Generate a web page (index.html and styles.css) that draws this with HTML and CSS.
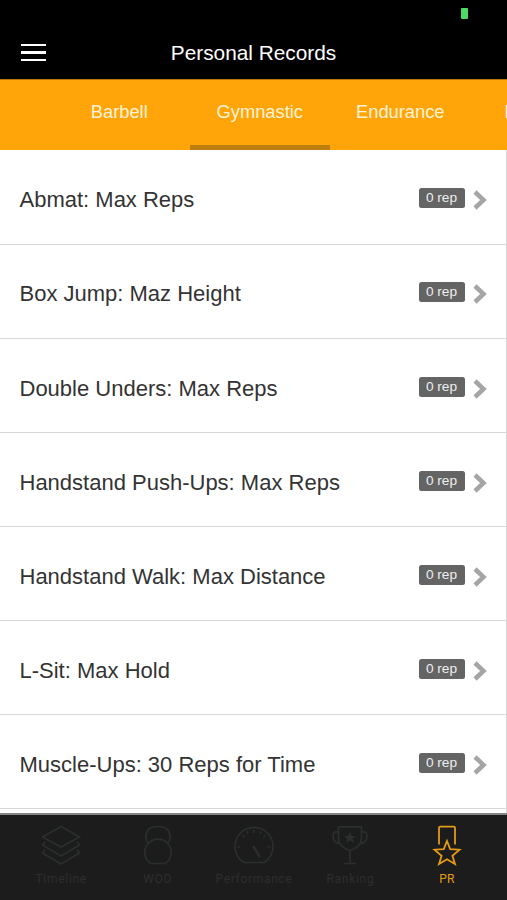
FILE: index.html
```
<!DOCTYPE html>
<html lang="en">
<head>
<meta charset="UTF-8">
<meta name="viewport" content="width=device-width, initial-scale=1.0">
<title>Personal Records</title>
<link rel="stylesheet" href="styles.css">
</head>
<body>

<header class="header">
    <div class="status"><span class="battery"></span></div>
    <div class="titlebar">
        <div class="menu"><span></span><span></span><span></span></div>
        <h1>Personal Records</h1>
    </div>
</header>

<nav class="tabs">
    <a class="tab">Barbell</a>
    <a class="tab active">Gymnastic</a>
    <a class="tab">Endurance</a>
    <a class="tab last">M</a>
</nav>

<main class="list">
    <div class="row">
        <span class="name">Abmat: Max Reps</span>
        <span class="badge">0 rep</span>
        <svg class="arrow" viewBox="0 0 14 20"><path d="M2 2l8.500 8L2 18"/></svg>
    </div>
    <div class="row">
        <span class="name">Box Jump: Maz Height</span>
        <span class="badge">0 rep</span>
        <svg class="arrow" viewBox="0 0 14 20"><path d="M2 2l8.500 8L2 18"/></svg>
    </div>
    <div class="row">
        <span class="name">Double Unders: Max Reps</span>
        <span class="badge">0 rep</span>
        <svg class="arrow" viewBox="0 0 14 20"><path d="M2 2l8.500 8L2 18"/></svg>
    </div>
    <div class="row">
        <span class="name">Handstand Push-Ups: Max Reps</span>
        <span class="badge">0 rep</span>
        <svg class="arrow" viewBox="0 0 14 20"><path d="M2 2l8.500 8L2 18"/></svg>
    </div>
    <div class="row">
        <span class="name">Handstand Walk: Max Distance</span>
        <span class="badge">0 rep</span>
        <svg class="arrow" viewBox="0 0 14 20"><path d="M2 2l8.500 8L2 18"/></svg>
    </div>
    <div class="row">
        <span class="name">L-Sit: Max Hold</span>
        <span class="badge">0 rep</span>
        <svg class="arrow" viewBox="0 0 14 20"><path d="M2 2l8.500 8L2 18"/></svg>
    </div>
    <div class="row">
        <span class="name">Muscle-Ups: 30 Reps for Time</span>
        <span class="badge">0 rep</span>
        <svg class="arrow" viewBox="0 0 14 20"><path d="M2 2l8.500 8L2 18"/></svg>
    </div>
</main>

<footer class="bottom">
    <a class="item">
        <svg viewBox="0 0 42 42">
            <path d="M21 1.500L39.500 12 21 22 2.500 12z"/>
            <path d="M5 17l-2.500 3L21 31l18.500-11-2.500-3"/>
            <path d="M5 25l-2.500 3L21 39l18.500-11-2.500-3"/>
        </svg>
        <span>Timeline</span>
    </a>
    <a class="item">
        <svg viewBox="0 0 42 42">
            <path d="M11 18.500C8.500 14.500 8 10 10.500 6 12 3 15 1.500 21 1.500s9 1.500 10.500 4.500c2.500 4 2 8.500-.5 12.500"/>
            <path d="M14 38.500a13.200 13.200 0 1 1 14 0z"/>
        </svg>
        <span>WOD</span>
    </a>
    <a class="item">
        <svg viewBox="0 0 42 42">
            <path d="M11 37.500a19 19 0 1 1 20 0z"/>
            <path d="M21 5v3M9.500 10l2 2M32.500 10l-2 2M4.500 22h3M37.500 22h-3M14 6.500l1 2M28 6.500l-1 2"/>
            <path class="needle" d="M20 21l7 11"/>
        </svg>
        <span>Performance</span>
    </a>
    <a class="item">
        <svg viewBox="0 0 42 42">
            <path d="M9.500 1.800h23v12c0 7-6 10-11.500 12-5.500-2-11.500-5-11.500-12z"/>
            <path d="M9.500 7C5 6 4 8.500 4 11.500s2 7 6.500 7M32.500 7C37 6 38 8.500 38 11.500s-2 7-6.500 7M21 26v12M15 38.500h12"/>
            <path class="fill" d="M21 7l1.700 4h4.300l-3.400 2.700 1.300 4.300-3.900-2.500-3.900 2.500 1.300-4.300-3.400-2.700h4.300z"/>
        </svg>
        <span>Ranking</span>
    </a>
    <a class="item selected">
        <svg viewBox="0 0 42 42">
            <path d="M13 19.500V2.800q0-1.200 1.200-1.200h13.600q1.200 0 1.200 1.200V19.500"/>
            <path d="M21 16l3.200 8.200 9.300.5-7.100 6.100 2.600 8.200-8-4.700-8 4.700 2.600-8.200-7.100-6.100 9.300-.5z"/>
        </svg>
        <span>PR</span>
    </a>
</footer>

</body>
</html>
```
FILE: styles.css
```
* {
    box-sizing: border-box;
}

body {
    margin: 0;
    height: 900px;
    display: flex;
    flex-direction: column;
    overflow: hidden;
    background-color: #fff;
    font-family: "Liberation Sans", Arial, sans-serif;
}

.header {
    height: 79px;
    background-color: #000;
}

.status {
    height: 26px;
    display: flex;
    justify-content: flex-end;
    padding: 8px 39px 0 0;
}

.battery {
    width: 7px;
    height: 11px;
    border-radius: 1px;
    background-color: #4cd964;
}

.titlebar {
    display: grid;
    grid-template-columns: 46px 1fr 46px;
    align-items: center;
    height: 53px;
}

.menu {
    display: flex;
    flex-direction: column;
    gap: 5px;
    width: 25px;
    margin-left: 20.5px;
}

.menu span {
    height: 2.5px;
    background-color: #fff;
}

h1 {
    margin: 0;
    color: #fff;
    font-size: 20.8px;
    font-weight: normal;
    text-align: center;
}

.tabs {
    display: flex;
    height: 71px;
    padding-left: 49px;
    overflow: hidden;
    background-color: #ffa50a;
    border-top: 1px solid #b87708;
}

.tab {
    flex: 0 0 140.5px;
    padding-top: 21px;
    border-bottom: 5px solid transparent;
    color: #fff3d6;
    font-size: 18.3px;
    line-height: 22px;
    text-align: center;
}

.tab.active {
    border-color: #bd7f10;
}

.tab.last {
    padding-left: 34px;
    text-align: left;
}

.list {
    height: 663px;
    padding-top: 0.8px;
    border-right: 1px solid #d8d8d8;
}

.row {
    display: flex;
    align-items: center;
    height: 94.1px;
    padding: 6px 19px 0 19.5px;
    border-bottom: 1.5px solid #d8d8d8;
}

.name {
    flex: 1;
    color: #333;
    font-size: 22px;
}

.badge {
    width: 46px;
    height: 20px;
    margin: -4px 8.5px 0 0;
    border-radius: 2.5px;
    background-color: #646464;
    color: #eee;
    font-size: 13.7px;
    line-height: 20px;
    text-align: center;
}

.arrow {
    width: 14px;
    height: 20px;
    fill: none;
    stroke: #a5a5a5;
    stroke-width: 4.5;
}

.bottom {
    display: flex;
    height: 87px;
    padding: 10px 12px 0 13px;
    border-top: 2px solid #858585;
    background-color: #1c1c1c;
}

.item {
    flex: 1 1 0;
    min-width: 0;
    display: flex;
    flex-direction: column;
    align-items: center;
    color: #2d2e2e;
    font-family: Roboto, sans-serif;
    font-size: 12px;
    line-height: 14px;
    letter-spacing: 0.7px;
    white-space: nowrap;
}

.item svg {
    width: 42px;
    height: 42px;
    margin-bottom: 4.5px;
    fill: none;
    stroke: #2a2e2e;
    stroke-width: 1.7;
}

.item .needle {
    stroke-width: 2.5;
}

.item .fill {
    fill: #2a2e2e;
    stroke: none;
}

.item.selected {
    color: #e59b14;
    letter-spacing: 0.2px;
}

.item.selected svg {
    stroke: #e59b14;
    stroke-width: 1.8;
}
```
